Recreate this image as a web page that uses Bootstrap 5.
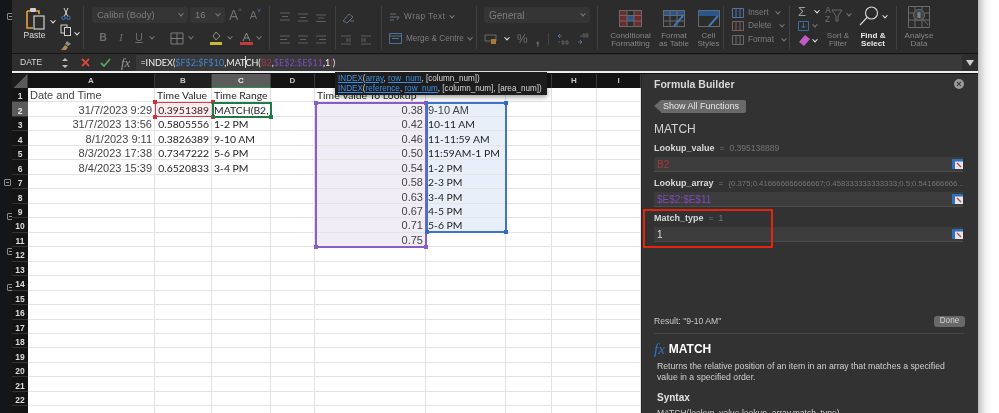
<!DOCTYPE html>
<html lang="en"><head><meta charset="utf-8"><title>Excel Formula Builder</title>
<link href="https://cdn.jsdelivr.net/npm/bootstrap@5.3.0/dist/css/bootstrap.min.css" rel="stylesheet">
<style>
html,body{height:413px;overflow:hidden}
body{background:#fff;font-family:"Liberation Sans",sans-serif;font-size:10px;color:#a0a0a0}
.stage{width:999px;height:413px;filter:blur(.3px);background:linear-gradient(90deg,#9a9a9a 977px,#c8c8c8 979px,#f0f0f0 985px,#fff 992px)}
.gutter{width:12px;background:#14171a;position:relative;flex:none}
.plusbox{position:absolute;left:7px;width:7px;height:7px;border:1px solid #8c8c8c;border-radius:1px}
.plusbox::after{content:"";position:absolute;left:1px;top:2px;width:3px;height:1px;background:#999}
.pb1{top:13px}.pb2{top:179px;left:4px}.pb3{top:213px}.pb4{top:248px}.pb5{top:284px}
.win{width:966px;height:413px;background:#2c2c2c;flex:none;position:relative;z-index:1}
.ribbon{height:54px;background:#2c2c2c;border-bottom:1px solid #151515;flex:none;padding-top:6px}
.rgroup{height:43px;border-right:1px solid #414141;flex:none}
.rcol{display:flex;flex-direction:column;justify-content:space-between}
.stackc{display:flex;flex-direction:column;align-items:center;justify-content:space-between;height:43px}
.g-paste{width:72px}.g-font{width:186px;padding-left:8px}.g-align{width:66px;padding:6px 0 0 9px}
.g-orient{width:46px;padding:6px 0 0 5px}.g-wrap{width:95px;padding:5px 0 0 7px}.g-num{width:121px;padding:1px 0 0 7px}
.g-style{width:126px}.g-cells{width:66px;padding:1px 0 3px 8px}.g-edit{width:107px}.g-ana{width:44px;flex:none}
.rowline{display:flex;align-items:center;height:18px}
.rowline2{margin-bottom:2px;color:#6e6e6e;font-size:10.5px}
.selbox{height:16px;background:#353535;border-radius:3px;color:#7e7e7e;font-size:9.5px;display:flex;align-items:center;justify-content:space-between;padding:0 5px}
.sb-font{width:96px}.sb-size{width:35px;margin-left:2px}.sb-num{width:106px;font-size:10px}
.rtxt{color:#868686;font-size:8.1px;line-height:8.6px;text-align:center;white-space:nowrap}
.rtxt-w{color:#e8e8e8;font-weight:700}
.chev{display:inline-block;width:4px;height:4px;border-right:1px solid #7d7d7d;border-bottom:1px solid #7d7d7d;transform:rotate(45deg) translate(-1px,-1px);flex:none}
.chev-w{border-color:#eee}
.ltxt{color:#7e7e7e;font-size:8.2px;white-space:nowrap}
.ltxt-s{letter-spacing:.55px}
.paste-c{width:36px;padding-left:9px}.paste-l{color:#ddd;font-size:8.6px;line-height:10px;margin-bottom:9px}
.clip-c{margin:1px 0 0 5px;gap:4px}
.ch1{margin:14px 0 0 3px}.ch2{margin:26px 0 0 3px}.ml2{margin-left:2px}.ml3{margin-left:3px}.ml4{margin-left:4px}.ml5{margin-left:5px}.ml10{margin-left:10px}
.bigA{font-size:14px;color:#6e6e6e;margin-left:4px}.smA{font-size:11px;color:#6e6e6e;margin-left:8px}.sup{font-size:7px;color:#3f7fd0;margin-top:-8px}
.cb{width:18px;text-align:center}.cbi{font-family:"Liberation Serif",serif}.cb1{margin-left:2px}
.cf-c{width:56px;padding:4px 0 0 9px}.ft-c{width:40px;padding-top:4px}.cs-c{width:29px;padding-top:4px}
.sum-c{width:31px;padding:0 0 3px 8px}.sumg{font-size:13px;line-height:11px;color:#9a9a9a;width:13px}
.sort-c{width:34px}.az{font-size:8.500px;line-height:8.500px;color:#5e5e5e;font-weight:700}.find-c{width:36px}
.pctg{font-size:12px;line-height:12px}.cmmg{font-size:14px;font-weight:700;line-height:12px}.vs{width:1px;height:12px;background:#444}
.numrow{margin-bottom:4px;color:#6e6e6e}
.fbar{height:17px;background:#2e2e2e;flex:none;position:relative}
.namebox{width:49px;color:#d8d8d8;font-size:8.6px;padding-left:8px;line-height:17px}
.ms12{margin-left:12px}
.fxs{font-family:"Liberation Serif",serif;font-style:italic;font-size:13px;color:#9a9a9a;margin-left:10px;line-height:17px}
.finput{flex:1;background:#393939;height:16px;margin-left:6px;border-radius:2px;font-family:Lato,sans-serif;font-size:9px;color:#f2f2f2;padding-left:4px;line-height:16px;white-space:nowrap}
.caret{display:inline-block;width:1px;height:12px;background:#ddd;margin:0 -.5px;vertical-align:-2px}
.c-b{color:#3f83cf}.c-r{color:#a8353f}.c-p{color:#7c4bb8}.c-w{color:#ddd}
.wline{height:3px;background:#101010;flex:none;border-top:2px solid #eee}
.workarea{flex:1;min-height:0}
.sheetwrap{width:629px;height:339px;background:#fff;position:relative;flex:none}
.sheet{table-layout:fixed;width:629px;border-collapse:separate;border-spacing:0;font-family:Lato,sans-serif;color:#222;font-size:10.4px}
.w16{width:16px}.w127{width:127px}.w57{width:57px}.w59{width:59px}.w44{width:44px}.w111{width:111px}.w80{width:80px}.w46{width:46px}.w45{width:45px}
.sheet th,.sheet td{padding:0 2px;height:14.48px;line-height:12px;white-space:nowrap;overflow:hidden;font-weight:400}
.sheet td{border-right:1px solid #e2e2e2;border-bottom:1px solid #e4e4e4;padding-top:1px}
.sheet thead th{background:#141414;color:#c8c8c8;font-size:8px;font-weight:700;text-align:center;height:14px;border-right:1px solid #3a3a3a;font-family:"Liberation Sans",sans-serif}
.sheet tbody th{background:#141414;color:#dcdcdc;font-size:8.5px;font-weight:700;text-align:center;border-bottom:1px solid #333;font-family:"Liberation Sans",sans-serif;padding:3px 0 0;line-height:10px}
.sheet thead th.hc{background:#5b5b5b;color:#eee;border-bottom:1px solid #2f8a55}
.sheet thead th.hb{background:#202020}
.sheet tbody th.hr{background:#5b5b5b;color:#eee}
.sheet thead th.corner{background:linear-gradient(135deg,#1d1d1d 52%,#5a5a5a 52%)}
.sheet .helv{font-family:"Liberation Sans",sans-serif;color:#444;font-size:11px}
.tr{text-align:right}
.sheet .fe{background:#f1edf7}.sheet .ff{background:#e9eff8}
.sel{position:absolute;pointer-events:none}
.sel i{position:absolute;width:4px;height:4px}
.s-red{left:143px;top:28px;width:58px;height:15px;border:1.5px solid #d0404a;background:rgba(220,60,70,.1)}
.s-red i{background:#cc3340}
.s-grn{left:200px;top:28px;width:60px;height:16px;border:2px solid #1f7a4a}
.s-grn i{background:#1f7a4a}
.s-pur{left:303px;top:28px;width:112px;height:146px;border:2px solid #8a5cc6}
.s-pur i{background:#8a5cc6}
.s-blu{left:414px;top:28px;width:81px;height:131px;border:2px solid #3f74cb}
.s-blu i{background:#3468c2}
.tl{left:-3px;top:-3px}.trc{right:-3px;top:-3px}.bl{left:-3px;bottom:-3px}.br{right:-3px;bottom:-3px}
.tip{position:absolute;left:323px;top:-2px;width:212px;height:23px;background:#1d1d1d;color:#d6d6d6;font-size:8.15px;line-height:9.7px;padding:2px 0 0 3px;box-shadow:0 2px 5px rgba(0,0,0,.4);white-space:nowrap}
.tip u{color:#3f8fe8}
.panel{flex:1;background:#323232;border-left:1px solid #262626;position:relative;padding:3px 14px 0 12px;overflow:hidden;color:#cfcfcf}
.ptitle{font-size:10.5px;font-weight:700;color:#d8d8d8;line-height:14px}
.pclose{width:10px;height:10px;border-radius:50%;background:#9a9a9a;color:#333;font-size:9px;line-height:10px;text-align:center;font-weight:700}
.backbtn{position:relative;margin:9px 0 0 7px;display:inline-block;background:#696969;color:#e8e8e8;font-size:9px;line-height:13px;height:13px;padding:0 7px 0 2px;border-radius:0 2px 2px 0}
.backbtn::before{content:"";position:absolute;left:-7px;top:0;border-right:7px solid #696969;border-top:6.5px solid transparent;border-bottom:6.5px solid transparent}
.fname{font-size:12px;color:#d4d4d4;margin-top:8px;line-height:16px;padding-bottom:2px}
.argl{font-size:9px;line-height:12px;margin-top:3px;height:12px;white-space:nowrap}
.argl b{color:#d8d8d8}
.argl span{color:#757575;margin-left:5px;font-size:8.5px}
.argl .argv-long{font-size:7.75px}
.arginp{height:15px;background:#3c3c3c;border-bottom:1px solid #4b4b4b;width:309px;margin:3px 0 5px;font-size:10px;line-height:15px;padding-left:3px;display:flex;justify-content:space-between;align-items:center}
.redbox{position:absolute;left:1px;top:135px;width:130px;height:39px;border:2px solid #e2250c}
.spacer{height:68px}
.resrow{width:311px}
.resline{font-size:8.6px;color:#c8c8c8;line-height:12px}
.donebtn{width:31px;height:11px;background:#696969;color:#d4d4d4;font-size:8.2px;line-height:10px;text-align:center;border-radius:3px}
.pdiv{border-top:1px solid #464646;margin-top:6px}
.hfx{font-family:"Liberation Serif",serif;font-style:italic;color:#2f74c4;font-size:15px}
.hname{font-size:12px;font-weight:700;color:#fff}
.pdesc{font-size:8.7px;line-height:11px;color:#d0d0d0;margin:0 0 0 3px;width:300px}
.psyn{font-size:10px;font-weight:700;color:#e2e2e2;margin:9px 0 0 3px;line-height:12px}
.pcode{font-size:8.5px;color:#cfcfcf;margin:3px 0 0 3px;white-space:nowrap}
svg{display:block;flex:none}
</style></head>
<body>
<svg width="0" height="0" class="position-absolute"><defs><symbol id="refic" viewBox="0 0 11 10"><rect width="11" height="10" fill="#e6e6ea"/><rect width="11" height="2.500" fill="#2e6fbe"/><rect width="3" height="10" fill="#2e6fbe"/><path d="M5 4l4 4" stroke="#c43c3c" stroke-width="1.200"/></symbol></defs></svg>
<div class="stage d-flex">
 <div class="gutter">
  <span class="plusbox pb1"></span><span class="plusbox pb2"></span><span class="plusbox pb3"></span><span class="plusbox pb4"></span><span class="plusbox pb5"></span>
 </div>
 <div class="win d-flex flex-column">
  <div class="ribbon d-flex">
   <div class="rgroup g-paste d-flex">
    <div class="stackc paste-c">
     <svg width="24" height="24" viewBox="0 0 24 24" fill="none"><path d="M4 5h3M13 5h3v3M4 5v17h6" stroke="#e8a33a" stroke-width="1.6"/><rect x="7" y="2" width="6" height="4" rx="1" fill="#cfcfcf"/><rect x="11" y="10" width="10" height="13" stroke="#d0d0d0" stroke-width="1.2"/></svg>
     <div class="paste-l">Paste</div>
    </div>
    <span class="chev chev-w ch1"></span>
    <div class="d-flex flex-column align-items-center clip-c">
     <svg width="10" height="13" viewBox="0 0 10 13" fill="none" stroke="#d8d8d8"><path d="M3 1l3.5 8M7 1L3.500 9"/><circle cx="2.500" cy="10.800" r="1.700" stroke="#3f7fd0"/><circle cx="7.500" cy="10.800" r="1.700" stroke="#3f7fd0"/></svg>
     <svg width="12" height="12" viewBox="0 0 12 12" fill="none" stroke="#cfcfcf"><rect x="1" y="1" width="6" height="8"/><rect x="4.500" y="3.500" width="6" height="8" fill="#2c2c2c"/></svg>
     <svg width="12" height="11" viewBox="0 0 12 11" fill="none"><path d="M7 1l4 3-3 2-3-2z" fill="#8d8d8d"/><path d="M5 5L1 10h5l2-3z" fill="#b08a4a"/></svg>
    </div>
    <span class="chev chev-w ch2"></span>
   </div>
   <div class="rgroup g-font rcol">
    <div class="rowline"><div class="selbox sb-font">Calibri (Body)<span class="chev"></span></div><div class="selbox sb-size">16<span class="chev"></span></div>
     <span class="bigA">A</span><span class="sup">^</span><span class="smA">A</span><span class="sup">˅</span></div>
    <div class="rowline rowline2">
     <b class="cb cb1">B</b><i class="cb cbi">I</i><u class="cb">U</u><span class="chev ml2"></span>
     <svg class="ms-3" width="14" height="13" viewBox="0 0 14 13" fill="none" stroke="#7d7d7d"><path d="M1 1h12v11H1zM7 1v11M1 6.500h12"/></svg><span class="chev ml5"></span>
     <svg class="ms-3" width="14" height="14" viewBox="0 0 14 14"><path d="M7 1l4 4-4 4-3-4z" fill="none" stroke="#8a8a8a"/><rect x="1" y="11" width="12" height="3" fill="#c9b936"/></svg><span class="chev ml5"></span>
     <svg class="ms-2" width="13" height="14" viewBox="0 0 13 14"><path d="M3 10L6.500 2 10 10M4.500 7h4" fill="none" stroke="#8a8a8a"/><rect x="0" y="11" width="13" height="3" fill="#c63a3a"/></svg><span class="chev ml4"></span>
    </div>
   </div>
   <div class="rgroup g-align rcol">
    <svg width="48" height="10" viewBox="0 0 48 10" stroke="#5f5f5f"><path d="M1 1h10M3 4.500h6M1 8h10M19 2h10M21 5.500h6M19 9h10M37 3h10M39 6h6M37 9.500h10"/></svg>
    <svg class="mb-1" width="48" height="10" viewBox="0 0 48 10" stroke="#5f5f5f"><path d="M1 1h10M1 4.500h7M1 8h10M19 1h10M21 4.500h6M19 8h10M37 1h10M40 4.500h7M37 8h10"/></svg>
   </div>
   <div class="rgroup g-orient rcol">
    <svg width="14" height="12" viewBox="0 0 14 12" fill="none" stroke="#5f6f80"><path d="M2 9L8 2l4 3-6 6zM9 9h4"/></svg>
    <svg class="mb-1" width="34" height="10" viewBox="0 0 34 10" stroke="#5f5f5f"><path d="M0 1h10M5 4h5M5 6h5M0 9h10M20 1h10M20 4h5M20 6h5M20 9h10"/></svg>
   </div>
   <div class="rgroup g-wrap rcol">
    <div class="d-flex align-items-center gap-1"><svg width="11" height="12" viewBox="0 0 11 12" fill="none" stroke="#67707c"><path d="M1 3h6M1 6h9l-2 3M1 9h4"/></svg><span class="ltxt ltxt-s">Wrap Text</span><span class="chev"></span></div>
    <div class="d-flex align-items-center gap-1 mb-1"><svg width="13" height="11" viewBox="0 0 13 11" fill="none" stroke="#4f7096"><path d="M.5.500h12v10H.5zM.5 3h12M3 5.500h7"/></svg><span class="ltxt">Merge &amp; Centre</span><span class="chev"></span></div>
   </div>
   <div class="rgroup g-num rcol">
    <div class="selbox sb-num">General<span class="chev"></span></div>
    <div class="d-flex align-items-center numrow">
     <svg width="13" height="10" viewBox="0 0 13 10" fill="none" stroke="#6a6a6a"><path d="M1 1h11v6H1z"/><rect x="7" y="5" width="5" height="5" fill="#a57c32" stroke="none"/></svg>
     <span class="chev chev-w ms-2"></span><span class="ms-2 pctg">%</span><span class="ms-2 cmmg">,</span>
     <span class="ms-2 vs"></span>
     <svg class="ms-2" width="12" height="12" viewBox="0 0 12 12" fill="none" stroke="#4f7096"><path d="M5 3H1l2-2M1 3l2 2"/><path d="M2 8v2M5 8h2v3H5zM9 8h2v3H9z" stroke="#5e5e5e"/></svg>
     <svg class="ms-2" width="12" height="12" viewBox="0 0 12 12" fill="none" stroke="#4f7096"><path d="M1 9h4L3 7M5 9l-2 2"/><path d="M4 2v2M6 1h2v3H6zM9 1h2v3H9z" stroke="#5e5e5e"/></svg>
    </div>
   </div>
   <div class="rgroup g-style d-flex">
    <div class="stackc cf-c">
     <svg width="23" height="17" viewBox="0 0 23 17" fill="none" stroke="#6a6a6a"><rect x=".5" y=".5" width="22" height="16"/><rect x="1" y="1" width="7" height="15" fill="#6e2c2c" stroke="none"/><rect x="15" y="1" width="7" height="15" fill="#6e2c2c" stroke="none"/><rect x="8" y="5" width="7" height="6" fill="#2a568e" stroke="none"/><path d="M8 .500v16M15 .500v16M1 5.500h21M1 11h21"/></svg>
     <div class="rtxt">Conditional<br>Formatting</div>
    </div>
    <div class="stackc ft-c">
     <svg width="22" height="17" viewBox="0 0 22 17" fill="none" stroke="#6a6a6a"><rect x=".5" y=".5" width="21" height="16"/><rect x="1" y="1" width="20" height="4" fill="#2a568e" stroke="none"/><path d="M7 .500v16M14 .500v16M1 5.500h20M1 11h20"/><path d="M11 16L20 6" stroke="#4277b5" stroke-width="2"/></svg>
     <div class="rtxt">Format<br>as Table</div>
    </div>
    <div class="stackc cs-c">
     <svg width="22" height="17" viewBox="0 0 22 17" fill="none" stroke="#6a6a6a"><rect x=".5" y=".5" width="21" height="16"/><rect x="1" y="1" width="20" height="5" fill="#2a568e" stroke="none"/><path d="M11 16L20 6" stroke="#4277b5" stroke-width="2"/></svg>
     <div class="rtxt">Cell<br>Styles</div>
    </div>
   </div>
   <div class="rgroup g-cells rcol">
    <div class="d-flex align-items-center gap-1"><svg width="12" height="10" viewBox="0 0 12 10" fill="none" stroke="#4e74a2"><path d="M.5.500h11v9H.5zM4 .500v9M8 .500v9"/></svg><span class="ltxt">Insert</span><span class="chev ms-1"></span></div>
    <div class="d-flex align-items-center gap-1"><svg width="12" height="10" viewBox="0 0 12 10" fill="none" stroke="#7a6060"><path d="M.5.500h11v9H.5zM4 .500v9M8 .500v9"/></svg><span class="ltxt">Delete</span><span class="chev ms-1"></span></div>
    <div class="d-flex align-items-center gap-1"><svg width="12" height="10" viewBox="0 0 12 10" fill="none" stroke="#6a6a6a"><path d="M.5.500h11v9H.5zM4 .500v9M8 .500v9"/></svg><span class="ltxt">Format</span><span class="chev ms-1"></span></div>
   </div>
   <div class="rgroup g-edit d-flex">
    <div class="rcol sum-c">
     <div class="d-flex align-items-center"><span class="sumg">Σ</span><span class="chev chev-w ms-1"></span></div>
     <div class="d-flex align-items-center"><svg width="11" height="10" viewBox="0 0 11 10" fill="none" stroke="#3f6c9e"><path d="M.5.500h10v9H.5zM5.500 2v5M3.500 5l2 2 2-2"/></svg><span class="chev ms-1"></span></div>
     <div class="d-flex align-items-center"><svg width="12" height="11" viewBox="0 0 12 11"><path d="M7 0l5 4-6 7-5-4z" fill="#c15ac4"/></svg><span class="chev chev-w ml3"></span></div>
    </div>
    <div class="stackc sort-c">
     <div class="d-flex align-items-center"><span class="az">A<br>Z</span><svg width="12" height="16" viewBox="0 0 12 16" fill="none" stroke="#6a6a6a"><path d="M1 3h10L7 9v5H5V9z"/></svg><span class="chev ms-1"></span></div>
     <div class="rtxt">Sort &amp;<br>Filter</div>
    </div>
    <div class="stackc find-c">
     <div class="d-flex align-items-center"><svg width="20" height="21" viewBox="0 0 20 21" fill="none" stroke="#d8d8d8" stroke-width="1.100"><circle cx="12.500" cy="7" r="6"/><path d="M8 11.500L1 19"/></svg><span class="chev chev-w ms-1"></span></div>
     <div class="rtxt rtxt-w">Find &amp;<br>Select</div>
    </div>
   </div>
   <div class="g-ana stackc">
    <svg width="22" height="22" viewBox="0 0 22 22" fill="none" stroke="#6a6a6a"><path d="M.5.500h21v21H.5zM.5 7h21M.5 14h21M7 .500v21M14 .500v21"/><circle cx="11" cy="9" r="5.500" fill="#444"/><path d="M15 13l5 6"/><rect x="9.500" y="6" width="3" height="6" fill="#6f8296" stroke="none"/></svg>
    <div class="rtxt">Analyse<br>Data</div>
   </div>
  </div>
  <div class="fbar d-flex align-items-center">
   <div class="namebox">DATE</div>
   <svg width="8" height="12" viewBox="0 0 8 12" fill="#bbb"><path d="M4 1l3 3H1zM4 11L1 8h6z"/></svg>
   <svg class="ms12" width="9" height="9" viewBox="0 0 9 9" stroke="#d8473e" stroke-width="1.800"><path d="M1 1l7 7M8 1L1 8"/></svg>
   <svg class="ml10" width="11" height="9" viewBox="0 0 11 9" fill="none" stroke="#52a55a" stroke-width="1.800"><path d="M1 5l3 3 6-7"/></svg>
   <span class="fxs">fx</span>
   <div class="finput">=INDEX(<span class="c-b">$F$2:$F$10</span>,MAT<span class="caret"></span>CH(<span class="c-r">B2</span>,<span class="c-p">$E$2:$E$11</span>,1<span class="c-r">)</span>)</div>
   <svg class="mx-1" width="8" height="6" viewBox="0 0 8 6" fill="#ccc"><path d="M0 0h8L4 6z"/></svg>
  </div>
  <div class="wline"></div>
  <div class="workarea d-flex">
   <div class="sheetwrap">
    <table class="sheet">
     <colgroup><col class="w16"><col class="w127"><col class="w57"><col class="w59"><col class="w44"><col class="w111"><col class="w80"><col class="w46"><col class="w45"><col class="w44"></colgroup>
     <thead><tr><th class="corner"></th><th>A</th><th class="hb">B</th><th class="hc">C</th><th>D</th><th>E</th><th>F</th><th>G</th><th>H</th><th>I</th></tr></thead>
     <tbody>
      <tr><th>1</th><td class="helv">Date and Time</td><td>Time Value</td><td>Time Range</td><td></td><td>Time Value To Lookup</td><td></td><td></td><td></td><td></td></tr>
      <tr><th class="hr">2</th><td class="helv tr">31/7/2023 9:29</td><td class="tr">0.3951389</td><td>MATCH(B2,</td><td></td><td class="helv tr fe">0.38</td><td class="helv ff">9-10 AM</td><td></td><td></td><td></td></tr>
      <tr><th>3</th><td class="helv tr">31/7/2023 13:56</td><td class="tr">0.5805556</td><td>1-2 PM</td><td></td><td class="helv tr fe">0.42</td><td class="ff">10-11 AM</td><td></td><td></td><td></td></tr>
      <tr><th>4</th><td class="helv tr">8/1/2023 9:11</td><td class="tr">0.3826389</td><td>9-10 AM</td><td></td><td class="helv tr fe">0.46</td><td class="ff">11-11:59 AM</td><td></td><td></td><td></td></tr>
      <tr><th>5</th><td class="helv tr">8/3/2023 17:38</td><td class="tr">0.7347222</td><td>5-6 PM</td><td></td><td class="helv tr fe">0.50</td><td class="ff">11:59AM-1 PM</td><td></td><td></td><td></td></tr>
      <tr><th>6</th><td class="helv tr">8/4/2023 15:39</td><td class="tr">0.6520833</td><td>3-4 PM</td><td></td><td class="helv tr fe">0.54</td><td class="ff">1-2 PM</td><td></td><td></td><td></td></tr>
      <tr><th>7</th><td></td><td></td><td></td><td></td><td class="helv tr fe">0.58</td><td class="ff">2-3 PM</td><td></td><td></td><td></td></tr>
      <tr><th>8</th><td></td><td></td><td></td><td></td><td class="helv tr fe">0.63</td><td class="ff">3-4 PM</td><td></td><td></td><td></td></tr>
      <tr><th>9</th><td></td><td></td><td></td><td></td><td class="helv tr fe">0.67</td><td class="ff">4-5 PM</td><td></td><td></td><td></td></tr>
      <tr><th>10</th><td></td><td></td><td></td><td></td><td class="helv tr fe">0.71</td><td class="ff">5-6 PM</td><td></td><td></td><td></td></tr>
      <tr><th>11</th><td></td><td></td><td></td><td></td><td class="helv tr fe">0.75</td><td></td><td></td><td></td><td></td></tr>
      <tr><th>12</th><td></td><td></td><td></td><td></td><td></td><td></td><td></td><td></td><td></td></tr>
      <tr><th>13</th><td></td><td></td><td></td><td></td><td></td><td></td><td></td><td></td><td></td></tr>
      <tr><th>14</th><td></td><td></td><td></td><td></td><td></td><td></td><td></td><td></td><td></td></tr>
      <tr><th>15</th><td></td><td></td><td></td><td></td><td></td><td></td><td></td><td></td><td></td></tr>
      <tr><th>16</th><td></td><td></td><td></td><td></td><td></td><td></td><td></td><td></td><td></td></tr>
      <tr><th>17</th><td></td><td></td><td></td><td></td><td></td><td></td><td></td><td></td><td></td></tr>
      <tr><th>18</th><td></td><td></td><td></td><td></td><td></td><td></td><td></td><td></td><td></td></tr>
      <tr><th>19</th><td></td><td></td><td></td><td></td><td></td><td></td><td></td><td></td><td></td></tr>
      <tr><th>20</th><td></td><td></td><td></td><td></td><td></td><td></td><td></td><td></td><td></td></tr>
      <tr><th>21</th><td></td><td></td><td></td><td></td><td></td><td></td><td></td><td></td><td></td></tr>
      <tr><th>22</th><td></td><td></td><td></td><td></td><td></td><td></td><td></td><td></td><td></td></tr>
      <tr><th></th><td></td><td></td><td></td><td></td><td></td><td></td><td></td><td></td><td></td></tr>
     </tbody>
    </table>
    <div class="sel s-red"><i class="tl"></i><i class="trc"></i><i class="bl"></i><i class="br"></i></div>
    <div class="sel s-grn"><i class="br"></i></div>
    <div class="sel s-pur"><i class="tl"></i><i class="trc"></i><i class="bl"></i><i class="br"></i></div>
    <div class="sel s-blu"><i class="trc"></i><i class="bl"></i><i class="br"></i></div>
    <div class="tip"><u>INDEX</u>(<u>array</u>, <u>row_num</u>, [column_num])<br><u>INDEX</u>(<u>reference</u>, <u>row_num</u>, [column_num], [area_num])</div>
   </div>
   <div class="panel">
    <div class="d-flex justify-content-between align-items-center"><div class="ptitle">Formula Builder</div><div class="pclose">×</div></div>
    <div class="backbtn">Show All Functions</div>
    <div class="fname">MATCH</div>
    <div class="argl"><b>Lookup_value</b><span>=</span><span>0.395138889</span></div>
    <div class="arginp"><span class="c-r">B2</span><svg width="11" height="10"><use href="#refic"/></svg></div>
    <div class="argl"><b>Lookup_array</b><span>=</span><span class="argv-long">{0.375;0.416666666666667;0.458333333333333;0.5;0.541666666...</span></div>
    <div class="arginp"><span class="c-p">$E$2:$E$11</span><svg width="11" height="10"><use href="#refic"/></svg></div>
    <div class="argl"><b>Match_type</b><span>=</span><span>1</span></div>
    <div class="arginp"><span class="c-w">1</span><svg width="11" height="10"><use href="#refic"/></svg></div>
    <div class="spacer"></div>
    <div class="d-flex justify-content-between align-items-center resrow"><div class="resline">Result: "9-10 AM"</div><div class="donebtn">Done</div></div>
    <div class="pdiv"></div>
    <div class="d-flex align-items-center gap-1 mt-1"><span class="hfx">fx</span><span class="hname">MATCH</span></div>
    <div class="pdesc">Returns the relative position of an item in an array that matches a specified value in a specified order.</div>
    <div class="psyn">Syntax</div>
    <div class="pcode">MATCH(lookup_value,lookup_array,match_type)</div>
    <div class="redbox"></div>
   </div>
  </div>
 </div>
</div>
</body></html>
